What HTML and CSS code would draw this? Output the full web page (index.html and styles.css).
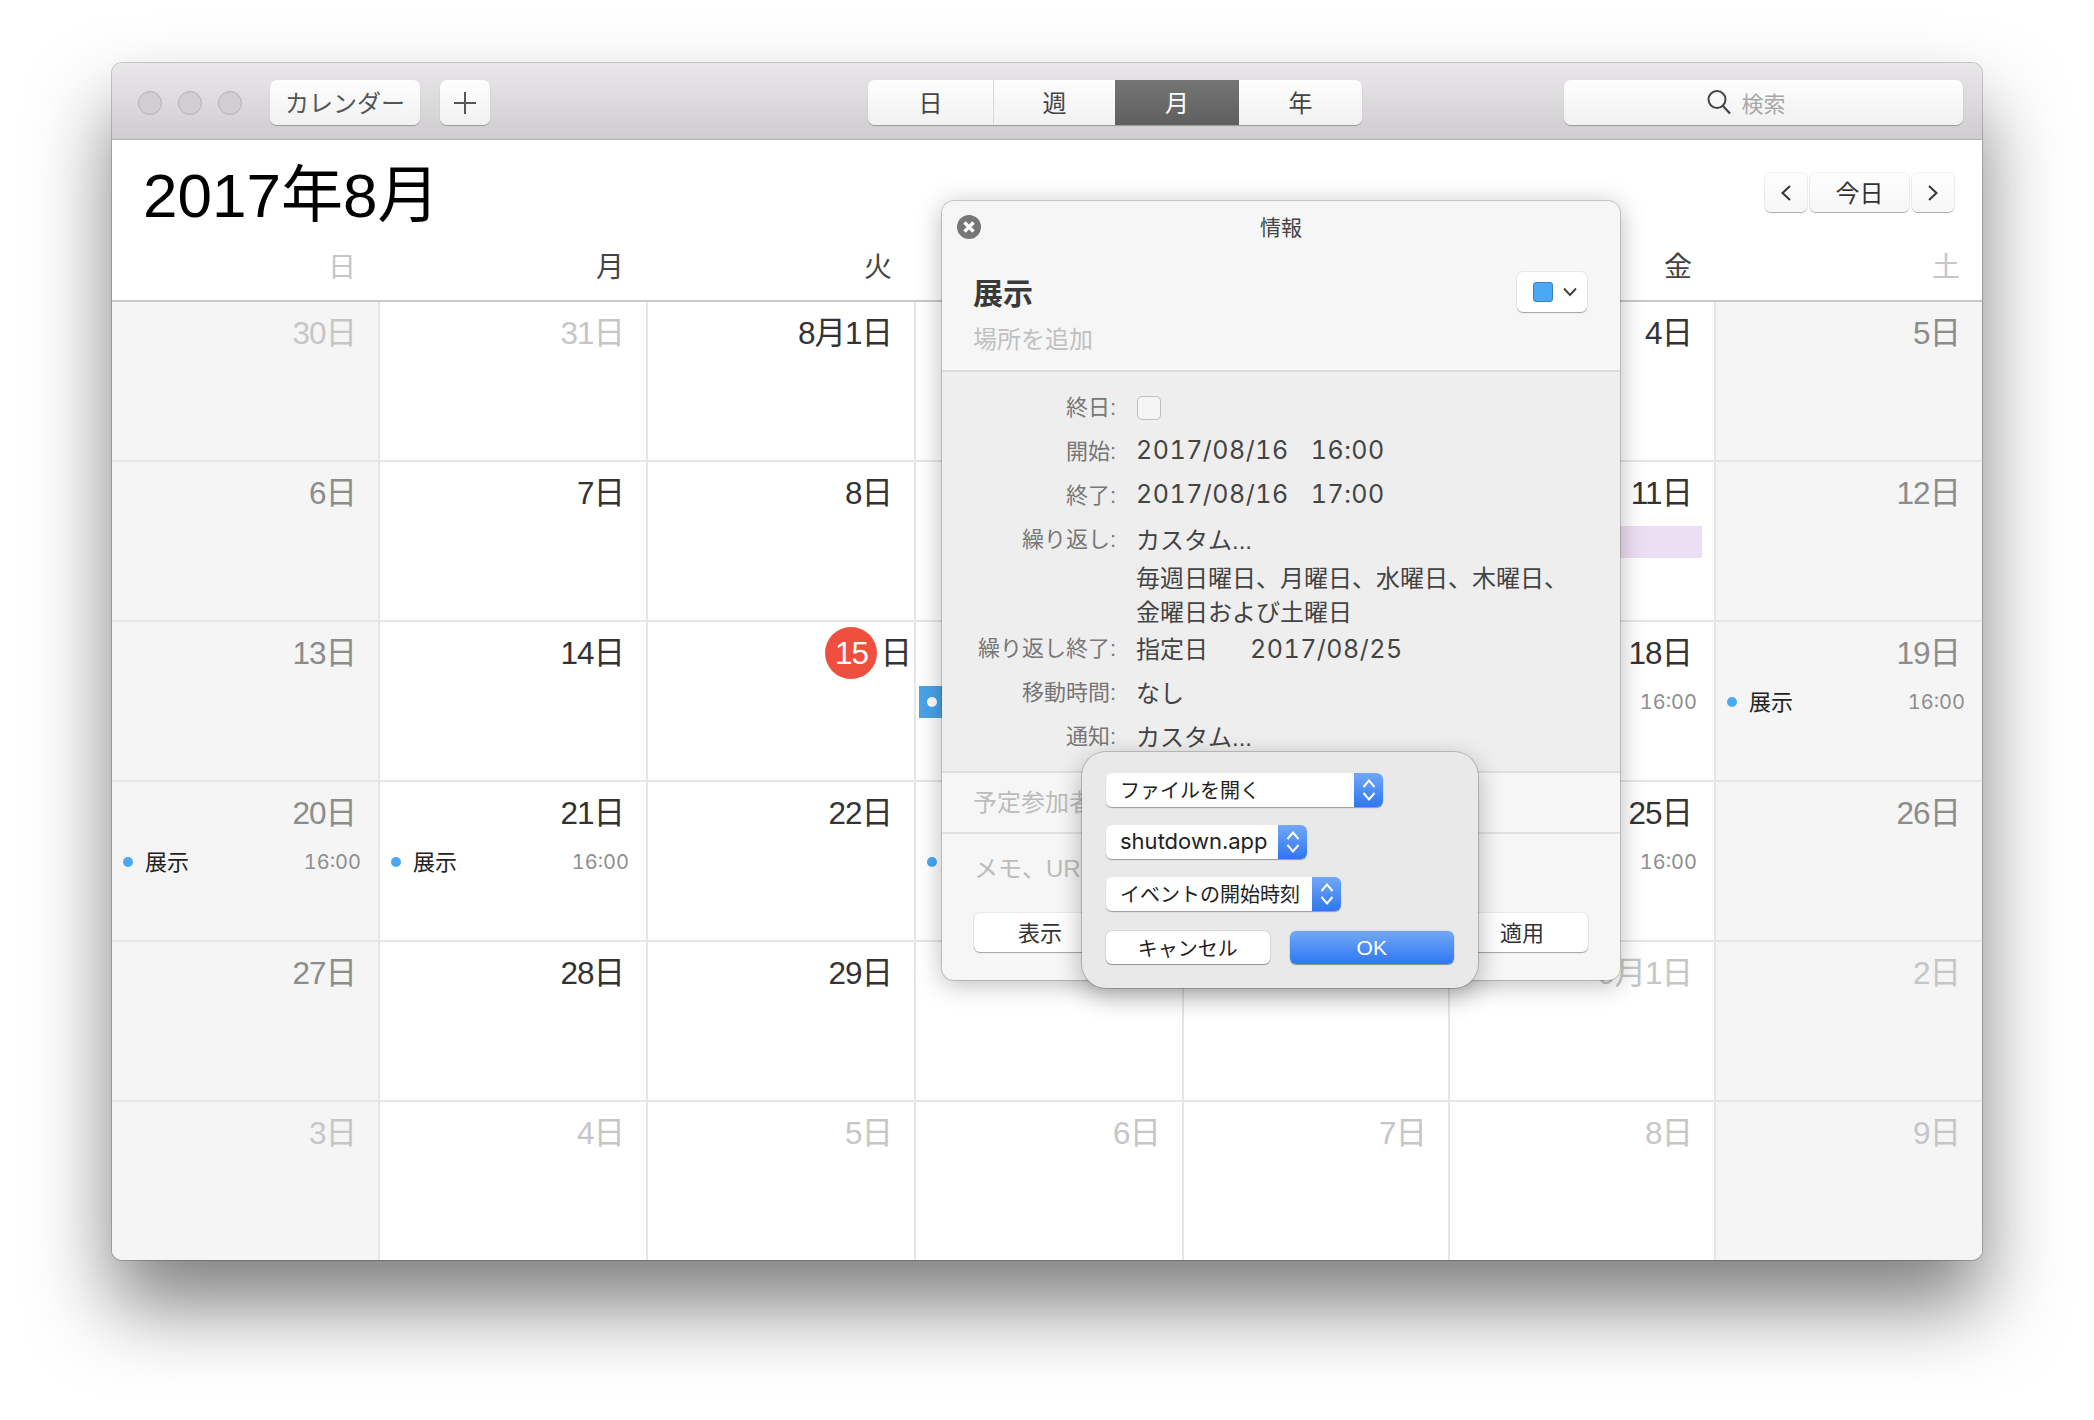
FILE: index.html
```html
<!DOCTYPE html>
<html lang="ja">
<head>
    <meta charset="UTF-8">
    <title>カレンダー</title>
    <link rel="stylesheet" href="styles.css">
</head>
<body>

<div class="window">
    <div class="titlebar">
        <div class="lights"><i></i><i></i><i></i></div>
        <button class="tbtn cal-btn">カレンダー</button>
        <button class="tbtn add-btn">
            <svg width="24" height="24" viewBox="0 0 24 24"><path d="M12 1v22M1 12h22" stroke="#555" stroke-width="2" fill="none"/></svg>
        </button>
        <div class="segments">
            <div class="seg seg-day">日</div>
            <div class="seg seg-week">週</div>
            <div class="seg seg-month active">月</div>
            <div class="seg seg-year">年</div>
        </div>
        <div class="search">
            <svg width="28" height="28" viewBox="0 0 28 28"><circle cx="12" cy="11.5" r="8.5" stroke="#444" stroke-width="2" fill="none"/><path d="M18 18l7 7.5" stroke="#444" stroke-width="2.2" fill="none"/></svg>
            <span>検索</span>
        </div>
    </div>

    <div class="head">
        <div class="title-row">
            <h1>2017年8月</h1>
            <div class="nav">
                <button class="nbtn nav-arrow"><svg width="14" height="20" viewBox="0 0 14 20"><path d="M11 3L3.5 10l7.5 7" stroke="#333" stroke-width="2" fill="none"/></svg></button>
                <button class="nbtn nav-today">今日</button>
                <button class="nbtn nav-arrow"><svg width="14" height="20" viewBox="0 0 14 20"><path d="M3 3l7.5 7L3 17" stroke="#333" stroke-width="2" fill="none"/></svg></button>
            </div>
        </div>
        <div class="weekdays">
            <div class="off">日</div><div>月</div><div>火</div><div></div><div></div><div>金</div><div class="off">土</div>
        </div>
    </div>

    <!-- cells under the popover carry no date, they can't be seen -->
    <div class="grid">
        <div class="cell weekend"><div class="day faded">30日</div></div>
        <div class="cell"><div class="day faded">31日</div></div>
        <div class="cell"><div class="day">8月1日</div></div>
        <div class="cell"></div>
        <div class="cell"></div>
        <div class="cell"><div class="day">4日</div></div>
        <div class="cell weekend"><div class="day muted">5日</div></div>

        <div class="cell weekend"><div class="day muted">6日</div></div>
        <div class="cell"><div class="day">7日</div></div>
        <div class="cell"><div class="day">8日</div></div>
        <div class="cell"></div>
        <div class="cell"></div>
        <div class="cell"><div class="day">11日</div><div class="bar-pink"></div></div>
        <div class="cell weekend"><div class="day muted">12日</div></div>

        <div class="cell weekend"><div class="day muted">13日</div></div>
        <div class="cell"><div class="day">14日</div></div>
        <div class="cell"><div class="day today"><span class="today-num">15</span>日</div></div>
        <div class="cell"><div class="day"></div>
            <div class="event selected"><i class="dot"></i></div></div>
        <div class="cell"></div>
        <div class="cell"><div class="day">18日</div>
            <div class="event"><span class="ev-time">16:00</span></div></div>
        <div class="cell weekend"><div class="day muted">19日</div>
            <div class="event"><i class="dot"></i><span class="ev-name">展示</span><span class="ev-time">16:00</span></div></div>

        <div class="cell weekend"><div class="day muted">20日</div>
            <div class="event"><i class="dot"></i><span class="ev-name">展示</span><span class="ev-time">16:00</span></div></div>
        <div class="cell"><div class="day">21日</div>
            <div class="event"><i class="dot"></i><span class="ev-name">展示</span><span class="ev-time">16:00</span></div></div>
        <div class="cell"><div class="day">22日</div></div>
        <div class="cell"><div class="day"></div>
            <div class="event"><i class="dot"></i></div></div>
        <div class="cell"></div>
        <div class="cell"><div class="day">25日</div>
            <div class="event"><span class="ev-time">16:00</span></div></div>
        <div class="cell weekend"><div class="day muted">26日</div></div>

        <div class="cell weekend"><div class="day muted">27日</div></div>
        <div class="cell"><div class="day">28日</div></div>
        <div class="cell"><div class="day">29日</div></div>
        <div class="cell"></div>
        <div class="cell"></div>
        <div class="cell"><div class="day faded">9月1日</div></div>
        <div class="cell weekend"><div class="day faded">2日</div></div>

        <div class="cell weekend"><div class="day faded">3日</div></div>
        <div class="cell"><div class="day faded">4日</div></div>
        <div class="cell"><div class="day faded">5日</div></div>
        <div class="cell"><div class="day faded">6日</div></div>
        <div class="cell"><div class="day faded">7日</div></div>
        <div class="cell"><div class="day faded">8日</div></div>
        <div class="cell weekend"><div class="day faded">9日</div></div>
    </div>

    <div class="popup">
        <div class="pop-head">
            <div class="pop-top">
                <svg class="pop-close" width="24" height="24" viewBox="0 0 24 24"><circle cx="12" cy="12" r="12" fill="#767676"/><path d="M7.5 7.5l9 9M16.5 7.5l-9 9" stroke="#fff" stroke-width="3.4" fill="none"/></svg>
                情報
            </div>
            <div class="pop-name-row">
                <div class="pop-name">展示</div>
                <button class="color-btn">
                    <i class="swatch"></i>
                    <svg width="16" height="10" viewBox="0 0 16 10"><path d="M2 1.5l6 6.5 6-6.5" stroke="#444" stroke-width="2" fill="none"/></svg>
                </button>
            </div>
            <div class="pop-place">場所を追加</div>
        </div>

        <div class="pop-form">
            <div class="frow"><label>終日:</label><i class="check"></i></div>
            <div class="frow"><label>開始:</label><span class="val"><span class="num">2017/08/16</span><b class="gap"></b><span class="num">16:00</span></span></div>
            <div class="frow"><label>終了:</label><span class="val"><span class="num">2017/08/16</span><b class="gap"></b><span class="num">17:00</span></span></div>
            <div class="frow"><label>繰り返し:</label><span class="val">カスタム...</span></div>
            <div class="fnote">毎週日曜日、月曜日、水曜日、木曜日、<br>金曜日および土曜日</div>
            <div class="frow"><label>繰り返し終了:</label><span class="val">指定日<b class="gap-wide"></b><span class="num">2017/08/25</span></span></div>
            <div class="frow"><label>移動時間:</label><span class="val">なし</span></div>
            <div class="frow"><label>通知:</label><span class="val">カスタム...</span></div>
        </div>

        <div class="pop-attend">予定参加者</div>
        <div class="pop-notes">
            <div class="notes-text">メモ、UR</div>
            <div class="pop-btns">
                <button class="pbtn">表示</button>
                <button class="pbtn">適用</button>
            </div>
        </div>

        <div class="alert">
            <div class="sel sel-action"><span>ファイルを開く</span>
                <div class="stepper"><svg width="16" height="26" viewBox="0 0 16 26"><path d="M2.5 10L8 3.5 13.5 10M2.5 16L8 22.5 13.5 16" stroke="#fff" stroke-width="2" fill="none"/></svg></div></div>
            <div class="sel sel-file"><span>shutdown.app</span>
                <div class="stepper"><svg width="16" height="26" viewBox="0 0 16 26"><path d="M2.5 10L8 3.5 13.5 10M2.5 16L8 22.5 13.5 16" stroke="#fff" stroke-width="2" fill="none"/></svg></div></div>
            <div class="sel sel-when"><span>イベントの開始時刻</span>
                <div class="stepper"><svg width="16" height="26" viewBox="0 0 16 26"><path d="M2.5 10L8 3.5 13.5 10M2.5 16L8 22.5 13.5 16" stroke="#fff" stroke-width="2" fill="none"/></svg></div></div>
            <div class="alert-btns">
                <button class="abtn">キャンセル</button>
                <button class="abtn ok">OK</button>
            </div>
        </div>
    </div>
</div>

</body>
</html>
```

FILE: styles.css
```css
* {
    box-sizing: border-box;
}
html, body {
    height: 100%;
}
body {
    margin: 0;
    padding: 63px 112px 0;
    background: #fff;
    overflow: hidden;
    font-family: "Liberation Sans", "Noto Sans CJK JP", sans-serif;
    color: #333;
}
button {
    font: inherit;
    color: inherit;
    border: none;
    padding: 0;
}

.window {
    position: relative;
    width: 1870px;
    height: 1197px;
    background: #fff;
    border-radius: 10px;
    box-shadow: 0 0 0 1px rgba(0, 0, 0, 0.2), 0 46px 80px rgba(0, 0, 0, 0.5);
}

/* title bar */
.titlebar {
    display: flex;
    align-items: center;
    height: 77px;
    padding: 3px 19px 0 26px;
    background: linear-gradient(#e9e7e9, #cfcdcf);
    border-bottom: 1px solid #b0aeb0;
    border-radius: 10px 10px 0 0;
}
.lights {
    display: flex;
    gap: 16px;
    margin-right: 28px;
}
.lights i {
    width: 24px;
    height: 24px;
    border-radius: 50%;
    background: #d0ced0;
    border: 1px solid #b4b2b4;
}
.tbtn {
    height: 45px;
    display: flex;
    align-items: center;
    justify-content: center;
    background: linear-gradient(#fefefe, #f1f1f1);
    border-radius: 7px;
    box-shadow: 0 1px 1px rgba(0, 0, 0, 0.28);
    color: #555;
    font-size: 24px;
    padding-bottom: 2px;
}
.cal-btn {
    width: 150px;
}
.add-btn {
    width: 50px;
    margin-left: 20px;
    padding-bottom: 0;
}
.segments {
    display: flex;
    height: 45px;
    margin-left: 378px;
    border-radius: 7px;
    overflow: hidden;
    background: linear-gradient(#fefefe, #f1f1f1);
    box-shadow: 0 1px 1px rgba(0, 0, 0, 0.28);
    font-size: 24px;
    color: #444;
}
.seg {
    display: flex;
    align-items: center;
    justify-content: center;
    border-right: 1px solid #d8d8d8;
    padding-bottom: 2px;
}
.seg-day {
    width: 126px;
}
.seg-week {
    width: 121px;
    border-right: none;
}
.seg-month {
    width: 124px;
    border-right: none;
}
.seg-year {
    width: 123px;
    border-right: none;
}
.seg.active {
    background: linear-gradient(#757575, #5f5f5f);
    color: #fff;
}
.search {
    display: flex;
    align-items: center;
    justify-content: center;
    gap: 8px;
    width: 399px;
    height: 45px;
    margin-left: auto;
    padding-right: 36px;
    padding-bottom: 2px;
    background: linear-gradient(#fefefe, #f1f1f1);
    border-radius: 7px;
    box-shadow: 0 1px 1px rgba(0, 0, 0, 0.28);
    font-size: 22px;
    color: #a8a8a8;
}

/* month heading */
.head {
    height: 162px;
    border-bottom: 2px solid #c9c9c9;
}
.title-row {
    display: flex;
    justify-content: space-between;
    height: 108px;
    padding: 20px 28px 0 31px;
}
h1 {
    margin: 0;
    font-size: 62px;
    line-height: 72px;
    font-weight: 400;
    color: #000;
}
.nav {
    display: flex;
    gap: 3px;
    margin-top: 13px;
}
.nbtn {
    height: 39px;
    display: flex;
    align-items: center;
    justify-content: center;
    background: linear-gradient(#fefefe, #f6f6f6);
    border-radius: 6px;
    box-shadow: 0 0 0 1px rgba(0, 0, 0, 0.05), 0 1px 1px rgba(0, 0, 0, 0.3);
    font-size: 24px;
    color: #333;
}
.nav-arrow {
    width: 42px;
}
.nav-today {
    width: 99px;
    padding-bottom: 2px;
}
.weekdays {
    display: grid;
    grid-template-columns: 266px 268px 268px 268px 266px 266px 1fr;
    font-size: 28px;
    line-height: 40px;
    text-align: right;
    color: #444;
}
.weekdays div {
    padding-right: 22px;
}
.weekdays .off {
    color: #c6c6c6;
}

/* month grid */
.grid {
    display: grid;
    grid-template-columns: 266px 268px 268px 268px 266px 266px 1fr;
    grid-template-rows: 158px;
    grid-auto-rows: 160px;
    border-radius: 0 0 10px 10px;
    overflow: hidden;
    height: 958px;
}
.cell {
    border-left: 2px solid #e6e6e6;
    border-top: 2px solid #e6e6e6;
    padding-top: 9px;
}
.cell:nth-child(7n+1) {
    border-left: none;
}
.cell:nth-child(-n+7) {
    border-top: none;
}
.cell.weekend {
    background: #f5f5f5;
}
.day {
    display: flex;
    justify-content: flex-end;
    align-items: center;
    height: 38px;
    padding-right: 22px;
    font-size: 31.5px;
    color: #333;
    letter-spacing: -1px;
}
.day.muted {
    color: #8c8c8c;
}
.day.faded {
    color: #c6c6c6;
}
.day.today {
    padding-right: 3px;
}
.today-num {
    display: flex;
    align-items: center;
    justify-content: center;
    flex: none;
    width: 52px;
    height: 52px;
    margin: 6px 3px 0 0;
    border-radius: 50%;
    background: #ef4f3f;
    color: #fff;
}
.event {
    display: flex;
    align-items: center;
    height: 32px;
    margin: 17px 17px 0 11px;
    font-size: 22px;
    color: #222;
}
.dot {
    width: 10px;
    height: 10px;
    border-radius: 50%;
    background: #49a9f5;
    margin-right: 12px;
}
.ev-name {
    padding-bottom: 5px;
}
.ev-time {
    margin-left: auto;
    font-family: "Inter", "Liberation Sans", sans-serif;
    font-size: 20px;
    font-variant-numeric: tabular-nums;
    color: #8e8e8e;
}
.event.selected {
    margin-left: 3px;
    margin-right: 0;
    padding-left: 8px;
    background: #4aa3ea;
    color: #fff;
}
.event.selected .dot {
    background: #fff;
}
.bar-pink {
    height: 32px;
    margin: 17px 12px 0 0;
    background: #ecdff3;
}

/* event popover */
.popup {
    position: absolute;
    left: 830px;
    top: 138px;
    width: 678px;
    height: 779px;
    display: flex;
    flex-direction: column;
    border-radius: 12px;
    background: #f6f6f6;
    box-shadow: 0 0 0 1px rgba(0, 0, 0, 0.16), 0 4px 26px rgba(0, 0, 0, 0.28);
}
.pop-head {
    height: 171px;
    padding: 0 31px;
    border-bottom: 2px solid #dcdcdc;
}
.pop-top {
    position: relative;
    height: 50px;
    margin: 0 -31px;
    padding-top: 9px;
    text-align: center;
    font-size: 21px;
    line-height: 36px;
    color: #444;
}
.pop-close {
    position: absolute;
    left: 15px;
    top: 14px;
}
.pop-name-row {
    display: flex;
    justify-content: space-between;
    align-items: center;
    height: 50px;
    margin-top: 16px;
    padding-right: 2px;
}
.pop-name {
    font-size: 30px;
    font-weight: 700;
    color: #3a3a3a;
    padding-bottom: 3px;
}
.color-btn {
    display: flex;
    align-items: center;
    gap: 9px;
    width: 70px;
    height: 40px;
    padding-left: 16px;
    background: #fff;
    border-radius: 6px;
    box-shadow: 0 0 0 1px rgba(0, 0, 0, 0.05), 0 1px 1px rgba(0, 0, 0, 0.3);
}
.swatch {
    width: 20px;
    height: 20px;
    border-radius: 3px;
    background: #4aa8f5;
    border: 1px solid #3a80c0;
}
.pop-place {
    margin-top: 6px;
    font-size: 24px;
    line-height: 34px;
    color: #c0c0c0;
}
.pop-form {
    height: 401px;
    padding-top: 12px;
    background: #eeeeee;
    border-bottom: 2px solid #dedede;
}
.frow {
    display: flex;
    align-items: center;
    height: 44px;
}
.frow label {
    width: 174px;
    margin-right: 20px;
    padding-bottom: 2px;
    text-align: right;
    font-size: 22px;
    color: #777;
}
.val {
    font-size: 24px;
    color: #444;
}
.num {
    font-family: "Inter", "Liberation Sans", sans-serif;
    font-size: 25px;
    font-variant-numeric: tabular-nums;
    letter-spacing: 0.5px;
}
.gap {
    display: inline-block;
    width: 22px;
}
.gap-wide {
    display: inline-block;
    width: 42px;
}
.check {
    width: 24px;
    height: 24px;
    margin: 4px 0 0 1px;
    border-radius: 5px;
    background: #f5f5f5;
    border: 1px solid #bdbdbd;
}
.fnote {
    height: 65px;
    margin-left: 194px;
    padding-top: 2px;
    font-size: 24px;
    line-height: 34px;
    color: #444;
}
.pop-attend {
    height: 61px;
    padding: 12px 31px 0;
    font-size: 24px;
    line-height: 36px;
    color: #bcbcbc;
    border-bottom: 2px solid #e2e2e2;
}
.pop-notes {
    flex: 1;
    padding: 0 32px;
}
.notes-text {
    padding-top: 17px;
    font-size: 24px;
    line-height: 36px;
    color: #bcbcbc;
}
.pop-btns {
    display: flex;
    justify-content: space-between;
    margin-top: 26px;
}
.pbtn {
    width: 132px;
    height: 39px;
    padding-bottom: 3px;
    background: #fff;
    border-radius: 6px;
    box-shadow: 0 0 0 1px rgba(0, 0, 0, 0.05), 0 1px 1px rgba(0, 0, 0, 0.3);
    font-size: 22px;
    color: #333;
}

/* alert sheet */
.alert {
    position: absolute;
    left: 140px;
    top: 551px;
    width: 396px;
    height: 236px;
    padding: 21px 24px 0;
    border-radius: 24px;
    background: #e9e9e9;
    box-shadow: 0 0 0 1px rgba(0, 0, 0, 0.18), 0 8px 26px rgba(0, 0, 0, 0.3);
}
.sel {
    display: flex;
    align-items: center;
    justify-content: space-between;
    height: 34px;
    margin-bottom: 18px;
    padding-left: 14px;
    background: #fff;
    border-radius: 6px;
    box-shadow: 0 1px 1px rgba(0, 0, 0, 0.35);
    font-size: 20px;
    color: #222;
}
.sel span {
    padding-bottom: 2px;
}
.sel-action {
    width: 277px;
}
.sel-file {
    width: 201px;
    font-family: "Inter", "Liberation Sans", sans-serif;
    font-size: 22px;
}
.sel-when {
    width: 235px;
}
.stepper {
    display: flex;
    align-items: center;
    justify-content: center;
    width: 29px;
    height: 34px;
    border-radius: 0 6px 6px 0;
    background: linear-gradient(#72a9f5, #2e76f2);
}
.alert-btns {
    display: flex;
    gap: 20px;
    margin-top: 20px;
}
.abtn {
    width: 164px;
    height: 33px;
    background: #fff;
    border-radius: 6px;
    box-shadow: 0 0 0 1px rgba(0, 0, 0, 0.05), 0 1px 1px rgba(0, 0, 0, 0.35);
    font-size: 20px;
    color: #222;
}
.abtn.ok {
    width: 165px;
    font-size: 21px;
    background: linear-gradient(#72a9f5, #2e76f2);
    color: #fff;
}
```
